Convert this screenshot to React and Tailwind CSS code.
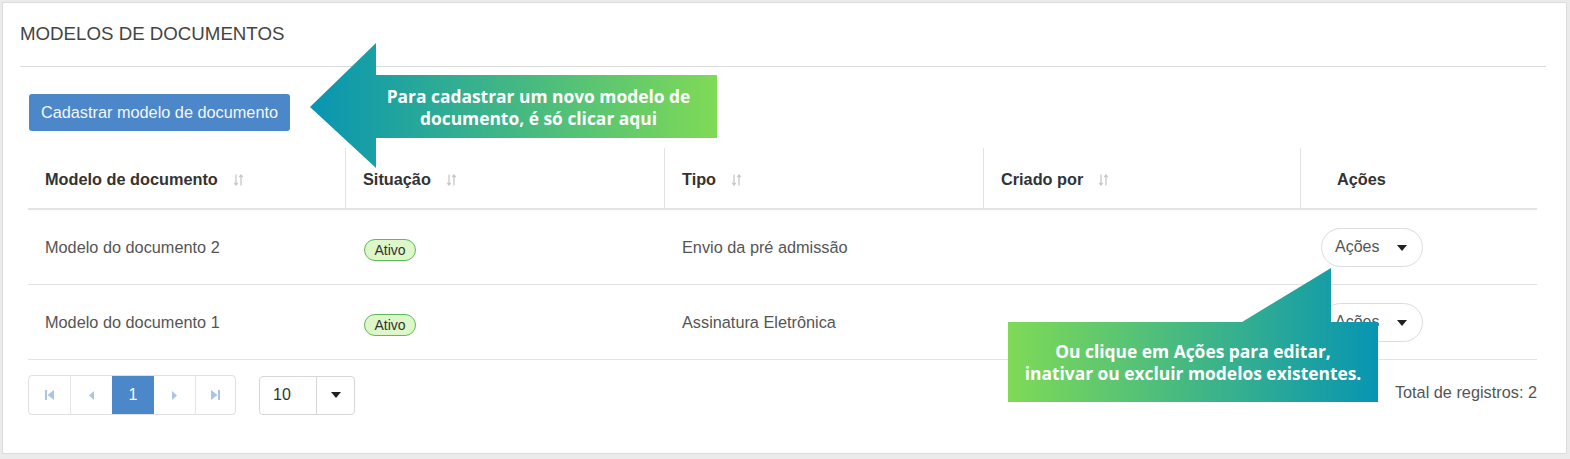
import React from 'react';

const SortIcon = () => (
    <svg width="9" height="12" viewBox="0 0 9 12" className="ml-[16px] mt-[1px]">
        <g stroke="#c8c8c8" strokeWidth="1.3" fill="none">
            <path d="M2 0.5V11M0.3 8.8L2 11L3.7 8.8" />
            <path d="M7 11.5V1M5.3 3.2L7 1L8.7 3.2" />
        </g>
    </svg>
);

const Caret = () => (
    <svg width="10" height="6" viewBox="0 0 10 6">
        <path d="M0 0H10L5 6Z" fill="#222" />
    </svg>
);

const columns = [
    { label: 'Modelo de documento', width: 'w-[318px]', sort: true },
    { label: 'Situação', width: 'w-[319px]', sort: true },
    { label: 'Tipo', width: 'w-[319px]', sort: true },
    { label: 'Criado por', width: 'w-[317px]', sort: true },
];

const rows = [
    { nome: 'Modelo do documento 2', tipo: 'Envio da pré admissão' },
    { nome: 'Modelo do documento 1', tipo: 'Assinatura Eletrônica' },
];

const AcoesButton = () => (
    <button className="flex items-center h-[39px] w-[102px] rounded-full border border-[#dcdcdc] bg-white pl-[13px] text-[16px] text-[#555]">
        <span>Ações</span>
        <span className="ml-[18px] mt-[1px]"><Caret /></span>
    </button>
);

const PageIcon = ({ type }) => {
    const c = '#a9c5e6';
    if (type === 'first') return (
        <svg width="9" height="10" viewBox="0 0 9 10"><rect x="0" y="0" width="2" height="10" fill={c} /><path d="M9 0L2.5 5L9 10Z" fill={c} /></svg>
    );
    if (type === 'prev') return (
        <svg width="5" height="9" viewBox="0 0 5 9"><path d="M5 0L0 4.5L5 9Z" fill={c} /></svg>
    );
    if (type === 'next') return (
        <svg width="5" height="9" viewBox="0 0 5 9"><path d="M0 0L5 4.5L0 9Z" fill={c} /></svg>
    );
    return (
        <svg width="9" height="10" viewBox="0 0 9 10"><rect x="7" y="0" width="2" height="10" fill={c} /><path d="M0 0L6.5 5L0 10Z" fill={c} /></svg>
    );
};

const App = () => {
    return (
        <div className="relative w-[1570px] h-[459px] overflow-hidden bg-[#ebebeb] pt-[2px] pl-[2px] font-['Liberation_Sans',Arial,sans-serif]">
            <div className="w-[1565px] h-[452px] bg-white border border-[#dcdcdc]">
                {/* titulo */}
                <h2 className="ml-[17px] pt-[19px] text-[18.7px] leading-[24px] text-[#444]">MODELOS DE DOCUMENTOS</h2>
                <div className="ml-[17px] mr-[20px] mt-[20px] border-t border-[#dddddd]"></div>

                <button className="ml-[26px] mt-[27px] h-[37px] w-[261px] rounded-[3px] bg-[#4b87c9] text-[16.3px] text-[#f4f7fc]">
                    Cadastrar modelo de documento
                </button>

                {/* tabela */}
                <div className="ml-[25px] mt-[17px] w-[1509px]">
                    <div className="flex h-[62px] border-b-2 border-[#e4e4e4]">
                        {columns.map((col) => (
                            <div key={col.label} className={`${col.width} flex items-center border-r border-[#e3e3e3] pl-[17px] pt-[2px]`}>
                                <span className="text-[16.3px] font-bold text-[#333]">{col.label}</span>
                                {col.sort && <SortIcon />}
                            </div>
                        ))}
                        <div className="flex-1 flex items-center pl-[36px] pt-[2px]">
                            <span className="text-[16.3px] font-bold text-[#333]">Ações</span>
                        </div>
                    </div>
                    {rows.map((row) => (
                        <div key={row.nome} className="flex h-[75px] items-center border-b border-[#e3e3e3] text-[16.3px] text-[#555]">
                            <div className="w-[318px] pl-[17px]">{row.nome}</div>
                            <div className="w-[319px] pl-[18px] pt-[4px]">
                                <span className="inline-flex h-[22px] w-[52px] items-center justify-center rounded-full border-[1.5px] border-[#5dbb5d] bg-[#ddf7c8] text-[14px] text-[#333]">Ativo</span>
                            </div>
                            <div className="w-[319px] pl-[17px]">{row.tipo}</div>
                            <div className="w-[317px]"></div>
                            <div className="flex-1 pl-[20px]"><AcoesButton /></div>
                        </div>
                    ))}

                    {/* rodape */}
                    <div className="mt-[15px] flex items-center justify-between">
                        <div className="flex items-center">
                            <div className="flex h-[40px] overflow-hidden rounded-[4px] border border-[#e0e0e0]">
                                <div className="flex w-[42px] items-center justify-center border-r border-[#e6e6e6]"><PageIcon type="first" /></div>
                                <div className="flex w-[41px] items-center justify-center"><PageIcon type="prev" /></div>
                                <div className="flex w-[42px] items-center justify-center bg-[#4b87c9] text-[16px] text-white">1</div>
                                <div className="flex w-[42px] items-center justify-center border-r border-[#e6e6e6]"><PageIcon type="next" /></div>
                                <div className="flex w-[39px] items-center justify-center"><PageIcon type="last" /></div>
                            </div>
                            <div className="ml-[23px] flex h-[39px] w-[96px] rounded-[4px] border border-[#d6d6d6]">
                                <div className="flex w-[57px] items-center border-r border-[#d6d6d6] pl-[13px] text-[16px] text-[#333]">10</div>
                                <div className="flex flex-1 items-center justify-center"><Caret /></div>
                            </div>
                        </div>
                        <span className="mb-[6px] text-[16.3px] text-[#555]">Total de registros: 2</span>
                    </div>
                </div>
            </div>

            {/* seta: cadastrar */}
            <svg className="absolute left-[310px] top-[43px]" width="407" height="125" viewBox="0 0 407 125">
                <defs>
                    <linearGradient id="g1" x1="0" y1="0" x2="407" y2="0" gradientUnits="userSpaceOnUse">
                        <stop offset="0" stopColor="#0795b2" />
                        <stop offset="1" stopColor="#7fda56" />
                    </linearGradient>
                </defs>
                <path d="M0 64L66 0V32H407V95H66V125Z" fill="url(#g1)" />
            </svg>
            <div className="absolute left-[376px] top-[75px] flex h-[63px] w-[341px] flex-col items-center justify-center pr-[16px] font-['Open_Sans',sans-serif] text-[17.4px] font-bold leading-[22px] text-white">
                <span>Para cadastrar um novo modelo de</span>
                <span>documento, é só clicar aqui</span>
            </div>

            {/* balao: acoes */}
            <svg className="absolute left-[1008px] top-[268px]" width="370" height="134" viewBox="0 0 370 134">
                <defs>
                    <linearGradient id="g2" x1="0" y1="0" x2="370" y2="0" gradientUnits="userSpaceOnUse">
                        <stop offset="0" stopColor="#7fda56" />
                        <stop offset="1" stopColor="#0795b2" />
                    </linearGradient>
                </defs>
                <path d="M0 54H234L323 0V54H370V134H0Z" fill="url(#g2)" />
            </svg>
            <div className="absolute left-[1008px] top-[322px] flex h-[80px] w-[370px] flex-col items-center justify-center font-['Open_Sans',sans-serif] text-[17.4px] font-bold leading-[22px] text-white">
                <span>Ou clique em Ações para editar,</span>
                <span>inativar ou excluir modelos existentes.</span>
            </div>
        </div>
    );
};

export default App;
